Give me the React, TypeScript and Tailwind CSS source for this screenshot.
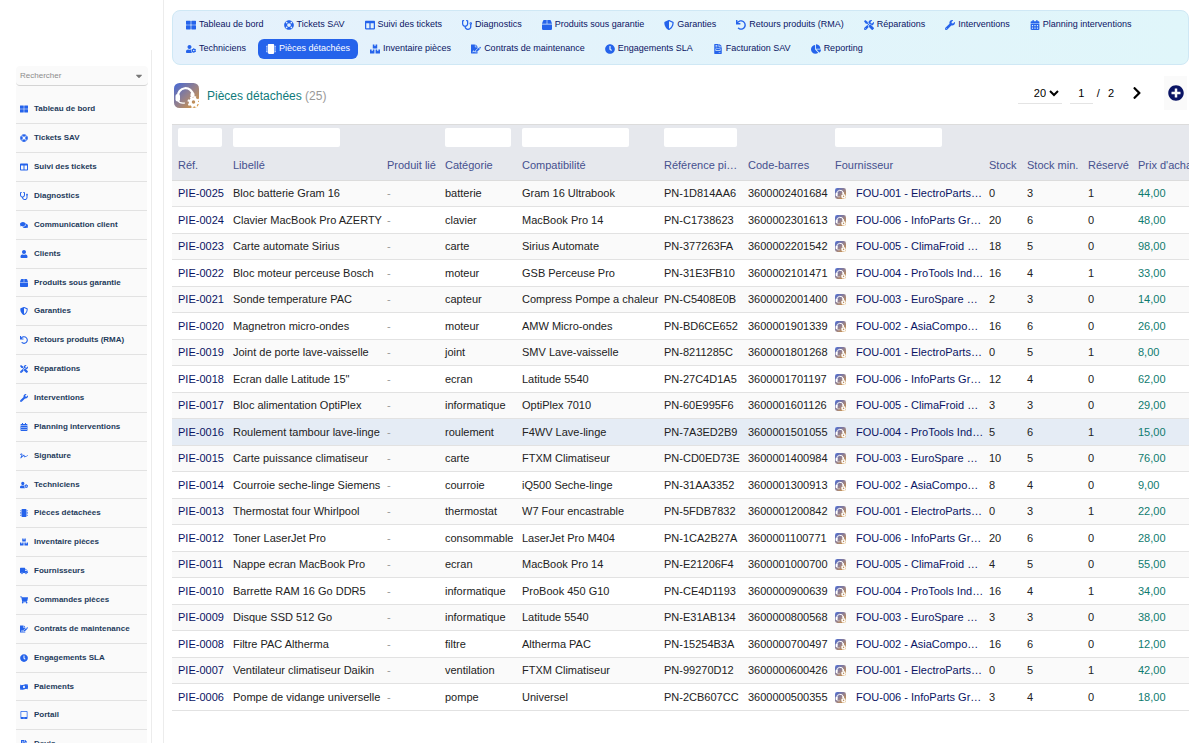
import type { IconType } from "react-icons";
import {
  FaBox,
  FaBoxes,
  FaCalendarAlt,
  FaCaretDown,
  FaChartPie,
  FaChevronRight,
  FaClock,
  FaColumns,
  FaComments,
  FaFileInvoice,
  FaFileInvoiceDollar,
  FaFileSignature,
  FaLifeRing,
  FaMicrochip,
  FaMoneyBillWave,
  FaPlusCircle,
  FaShieldAlt,
  FaShoppingCart,
  FaSignature,
  FaStethoscope,
  FaTabletAlt,
  FaThLarge,
  FaTools,
  FaTruck,
  FaUndo,
  FaUser,
  FaUserCog,
  FaWrench,
} from "react-icons/fa";

type NavItem = { label: string; icon: IconType };

const sideItems: NavItem[] = [
  { label: "Tableau de bord", icon: FaThLarge },
  { label: "Tickets SAV", icon: FaLifeRing },
  { label: "Suivi des tickets", icon: FaColumns },
  { label: "Diagnostics", icon: FaStethoscope },
  { label: "Communication client", icon: FaComments },
  { label: "Clients", icon: FaUser },
  { label: "Produits sous garantie", icon: FaBox },
  { label: "Garanties", icon: FaShieldAlt },
  { label: "Retours produits (RMA)", icon: FaUndo },
  { label: "Réparations", icon: FaTools },
  { label: "Interventions", icon: FaWrench },
  { label: "Planning interventions", icon: FaCalendarAlt },
  { label: "Signature", icon: FaSignature },
  { label: "Techniciens", icon: FaUserCog },
  { label: "Pièces détachées", icon: FaMicrochip },
  { label: "Inventaire pièces", icon: FaBoxes },
  { label: "Fournisseurs", icon: FaTruck },
  { label: "Commandes pièces", icon: FaShoppingCart },
  { label: "Contrats de maintenance", icon: FaFileSignature },
  { label: "Engagements SLA", icon: FaClock },
  { label: "Paiements", icon: FaMoneyBillWave },
  { label: "Portail", icon: FaTabletAlt },
  { label: "Devis", icon: FaFileInvoiceDollar },
];

const topItems: NavItem[] = [
  { label: "Tableau de bord", icon: FaThLarge },
  { label: "Tickets SAV", icon: FaLifeRing },
  { label: "Suivi des tickets", icon: FaColumns },
  { label: "Diagnostics", icon: FaStethoscope },
  { label: "Produits sous garantie", icon: FaBox },
  { label: "Garanties", icon: FaShieldAlt },
  { label: "Retours produits (RMA)", icon: FaUndo },
  { label: "Réparations", icon: FaTools },
  { label: "Interventions", icon: FaWrench },
  { label: "Planning interventions", icon: FaCalendarAlt },
  { label: "Techniciens", icon: FaUserCog },
  { label: "Pièces détachées", icon: FaMicrochip },
  { label: "Inventaire pièces", icon: FaBoxes },
  { label: "Contrats de maintenance", icon: FaFileSignature },
  { label: "Engagements SLA", icon: FaClock },
  { label: "Facturation SAV", icon: FaFileInvoice },
  { label: "Reporting", icon: FaChartPie },
];

const columns = [
  { label: "Réf.", col: "w-[55px]", filter: "w-11" },
  { label: "Libellé", col: "w-[154px]", filter: "w-[107px]" },
  { label: "Produit lié", col: "w-[58px]", filter: "" },
  { label: "Catégorie", col: "w-[77px]", filter: "w-[66px]" },
  { label: "Compatibilité", col: "w-[142px]", filter: "w-[107px]" },
  { label: "Référence pi…", col: "w-[84px]", filter: "w-[73px]" },
  { label: "Code-barres", col: "w-[87px]", filter: "" },
  { label: "Fournisseur", col: "w-[154px]", filter: "w-[107px]" },
  { label: "Stock", col: "w-[38px]", filter: "" },
  { label: "Stock min.", col: "w-[61px]", filter: "" },
  { label: "Réservé", col: "w-[50px]", filter: "" },
  { label: "Prix d'achat", col: "w-[80px]", filter: "" },
];

const suppliers: Record<number, string> = {
  1: "FOU-001 - ElectroParts…",
  2: "FOU-002 - AsiaCompo…",
  3: "FOU-003 - EuroSpare …",
  4: "FOU-004 - ProTools Ind…",
  5: "FOU-005 - ClimaFroid …",
  6: "FOU-006 - InfoParts Gr…",
};

type Part = [string, string, string, string, string, string, number, number, number, number, string];

// ref, label, category, compatibility, part number, barcode, supplier, stock, min, reserved, price
const parts: Part[] = [
  ["PIE-0025", "Bloc batterie Gram 16", "batterie", "Gram 16 Ultrabook", "PN-1D814AA6", "3600002401684", 1, 0, 3, 1, "44,00"],
  ["PIE-0024", "Clavier MacBook Pro AZERTY", "clavier", "MacBook Pro 14", "PN-C1738623", "3600002301613", 6, 20, 6, 0, "48,00"],
  ["PIE-0023", "Carte automate Sirius", "carte", "Sirius Automate", "PN-377263FA", "3600002201542", 5, 18, 5, 0, "98,00"],
  ["PIE-0022", "Bloc moteur perceuse Bosch", "moteur", "GSB Perceuse Pro", "PN-31E3FB10", "3600002101471", 4, 16, 4, 1, "33,00"],
  ["PIE-0021", "Sonde temperature PAC", "capteur", "Compress Pompe a chaleur", "PN-C5408E0B", "3600002001400", 3, 2, 3, 0, "14,00"],
  ["PIE-0020", "Magnetron micro-ondes", "moteur", "AMW Micro-ondes", "PN-BD6CE652", "3600001901339", 2, 16, 6, 0, "26,00"],
  ["PIE-0019", "Joint de porte lave-vaisselle", "joint", "SMV Lave-vaisselle", "PN-8211285C", "3600001801268", 1, 0, 5, 1, "8,00"],
  ["PIE-0018", "Ecran dalle Latitude 15\"", "ecran", "Latitude 5540", "PN-27C4D1A5", "3600001701197", 6, 12, 4, 0, "62,00"],
  ["PIE-0017", "Bloc alimentation OptiPlex", "informatique", "OptiPlex 7010", "PN-60E995F6", "3600001601126", 5, 3, 3, 0, "29,00"],
  ["PIE-0016", "Roulement tambour lave-linge", "roulement", "F4WV Lave-linge", "PN-7A3ED2B9", "3600001501055", 4, 5, 6, 1, "15,00"],
  ["PIE-0015", "Carte puissance climatiseur", "carte", "FTXM Climatiseur", "PN-CD0ED73E", "3600001400984", 3, 10, 5, 0, "76,00"],
  ["PIE-0014", "Courroie seche-linge Siemens", "courroie", "iQ500 Seche-linge", "PN-31AA3352", "3600001300913", 2, 8, 4, 0, "9,00"],
  ["PIE-0013", "Thermostat four Whirlpool", "thermostat", "W7 Four encastrable", "PN-5FDB7832", "3600001200842", 1, 0, 3, 1, "22,00"],
  ["PIE-0012", "Toner LaserJet Pro", "consommable", "LaserJet Pro M404", "PN-1CA2B27A", "3600001100771", 6, 20, 6, 0, "28,00"],
  ["PIE-0011", "Nappe ecran MacBook Pro", "ecran", "MacBook Pro 14", "PN-E21206F4", "3600001000700", 5, 4, 5, 0, "55,00"],
  ["PIE-0010", "Barrette RAM 16 Go DDR5", "informatique", "ProBook 450 G10", "PN-CE4D1193", "3600000900639", 4, 16, 4, 1, "34,00"],
  ["PIE-0009", "Disque SSD 512 Go", "informatique", "Latitude 5540", "PN-E31AB134", "3600000800568", 3, 3, 3, 0, "38,00"],
  ["PIE-0008", "Filtre PAC Altherma", "filtre", "Altherma PAC", "PN-15254B3A", "3600000700497", 2, 16, 6, 0, "12,00"],
  ["PIE-0007", "Ventilateur climatiseur Daikin", "ventilation", "FTXM Climatiseur", "PN-99270D12", "3600000600426", 1, 0, 5, 1, "42,00"],
  ["PIE-0006", "Pompe de vidange universelle", "pompe", "Universel", "PN-2CB607CC", "3600000500355", 6, 3, 4, 0, "18,00"],
];

function Logo({ className }: { className: string }) {
  return (
    <svg viewBox="0 0 50 50" className={className} aria-hidden="true">
      <defs>
        <linearGradient id="logo-bg" x1="0" y1="0" x2="1" y2="1">
          <stop offset="0" stopColor="#4468d8" />
          <stop offset="0.5" stopColor="#94808c" />
          <stop offset="1" stopColor="#e09a34" />
        </linearGradient>
      </defs>
      <rect width="50" height="50" rx="11" fill="url(#logo-bg)" />
      <path d="M8 27a15 15 0 0 1 30-3" fill="none" stroke="#fff" strokeWidth="4.5" />
      <rect x="3" y="22" width="9" height="15" rx="4" fill="#fff" />
      <rect x="33" y="19" width="8" height="9" rx="3" fill="#fff" />
      <path d="M8 35c2 5 7 6 14 5" fill="none" stroke="#fff" strokeWidth="2.5" />
      <circle cx="39" cy="38" r="6.5" fill="none" stroke="#fff" strokeWidth="6" />
      <circle cx="39" cy="38" r="10" fill="none" stroke="#fff" strokeWidth="4" strokeDasharray="3.9 3.95" />
    </svg>
  );
}

function Sidebar() {
  return (
    <aside className="w-[164px] shrink-0 overflow-hidden border-r border-[#ececec] pt-[50px] pr-[11px]">
      <div className="h-full border-r border-[#ececec] pl-4 pr-[3px] pt-4">
        <button
          type="button"
          className="flex h-5 w-full items-center justify-between rounded-sm border-b border-[#d4d4d4] bg-[#fafafa] pl-1 pr-1 text-[8px] text-[#8c8c8c]"
        >
          Rechercher
          <FaCaretDown className="size-[10px] text-[#777]" />
        </button>
        <nav className="mr-px bg-[#fafafa] pt-[9px]">
          {sideItems.map(({ label, icon: Icon }) => (
            <a
              key={label}
              href="#"
              className="flex h-[29px] items-center border-b border-[#e2e2e2] pl-1 text-[8px] font-bold text-[#1e3a5a] nth-[7n]:h-7"
            >
              <span className="w-[14px] text-[#2563eb]">
                <Icon className="h-2 w-auto" />
              </span>
              {label}
            </a>
          ))}
        </nav>
      </div>
    </aside>
  );
}

function TopNav() {
  return (
    <nav className="flex flex-wrap gap-1 rounded-lg border border-[#cfe8f5] bg-linear-to-r from-[#e5f1fc] to-[#e0f6fa] px-[5px] pt-1 pb-[5px]">
      {topItems.map(({ label, icon: Icon }) => {
        const active = label === "Pièces détachées";
        return (
          <a
            key={label}
            href="#"
            className={`flex h-5 items-center gap-[3px] rounded-md px-2 text-[9px] whitespace-nowrap ${
              active ? "bg-[#2563eb] text-white" : "text-[#0a1464]"
            }`}
          >
            <Icon className={`h-[10px] w-auto ${active ? "text-white" : "text-[#2563eb]"}`} />
            {label}
          </a>
        );
      })}
    </nav>
  );
}

function TitleBar() {
  return (
    <div className="flex h-[59px] items-start justify-between pt-[11px]">
      <div className="flex items-center gap-2 pt-[7px] pl-[2px]">
        <Logo className="size-[25px]" />
        <h1 className="text-[12px] text-[#0f7b7b]">
          Pièces détachées <span className="text-[#999]">(25)</span>
        </h1>
      </div>
      <div className="flex h-[34px] items-center text-[11px] text-black">
        <select
          aria-label="Lignes par page"
          defaultValue="20"
          className="h-[22px] w-11 border-b border-[#e4e4e4] bg-transparent pl-3 text-[11px]"
        >
          <option>20</option>
          <option>50</option>
        </select>
        <input
          aria-label="Page"
          defaultValue="1"
          className="ml-2 h-[22px] w-[23px] border-b border-[#e4e4e4] text-center text-[11px]"
        />
        <span className="ml-1">/</span>
        <span className="ml-2">2</span>
        <button type="button" aria-label="Page suivante" className="ml-4">
          <FaChevronRight className="size-[14px]" />
        </button>
        <button
          type="button"
          aria-label="Nouvelle pièce"
          className="ml-5 mr-[2px] flex h-[34px] w-[23px] items-center justify-center bg-[#fafafa] text-[#0a1464]"
        >
          <FaPlusCircle className="size-4" />
        </button>
      </div>
    </div>
  );
}

function PartsTable() {
  return (
    <div className="overflow-hidden">
      <table className="w-[1040px] min-w-full table-fixed text-left text-[11px] whitespace-nowrap text-[#222]">
        <colgroup>
          {columns.map((c) => (
            <col key={c.label} className={c.col} />
          ))}
        </colgroup>
        <thead className="border-t border-[#dcdcdc] bg-[#e6e8ed] text-[#45508f]">
          <tr className="h-[26px]">
            {columns.map((c) => (
              <td key={c.label} className="pl-[6px]">
                {c.filter && (
                  <input
                    aria-label={`Filtrer ${c.label}`}
                    className={`block h-[19px] rounded-xs bg-white px-1 ${c.filter}`}
                  />
                )}
              </td>
            ))}
          </tr>
          <tr className="h-[30px] border-b border-[#dcdcdc]">
            {columns.map((c) => (
              <th key={c.label} scope="col" className="pl-[6px] font-normal">
                {c.label}
              </th>
            ))}
          </tr>
        </thead>
        <tbody>
          {parts.map(([ref, label, category, compat, pn, barcode, supplier, stock, min, reserved, price]) => (
            <tr
              key={ref}
              className={`h-[26px] border-b border-[#e2e2e2] even:h-[27px] ${
                ref === "PIE-0016" ? "bg-[#e5ecf5]" : "odd:bg-[#fafafa]"
              }`}
            >
              <td className="pl-[6px]">
                <a href="#" className="text-[#0a1464]">{ref}</a>
              </td>
              <td className="pl-[6px]">{label}</td>
              <td className="pl-[6px] text-[#999]">-</td>
              <td className="pl-[6px]">{category}</td>
              <td className="pl-[6px]">{compat}</td>
              <td className="pl-[6px]">{pn}</td>
              <td className="pl-[6px]">{barcode}</td>
              <td className="pl-[6px]">
                <a href="#" className="flex items-center gap-[10px] text-[#0a1464]">
                  <Logo className="size-[11px] shrink-0" />
                  {suppliers[supplier]}
                </a>
              </td>
              <td className="pl-[6px]">{stock}</td>
              <td className="pl-[6px]">{min}</td>
              <td className="pl-[6px]">{reserved}</td>
              <td className="pl-[6px] text-[#0f7b6f]">{price}</td>
            </tr>
          ))}
        </tbody>
      </table>
    </div>
  );
}

export default function App() {
  return (
    <div className="flex h-screen overflow-hidden bg-white font-['Liberation_Sans',Arial,sans-serif]">
      <Sidebar />
      <main className="min-w-0 flex-1 pt-[10px] pr-[11px] pl-2">
        <TopNav />
        <TitleBar />
        <PartsTable />
      </main>
    </div>
  );
}
